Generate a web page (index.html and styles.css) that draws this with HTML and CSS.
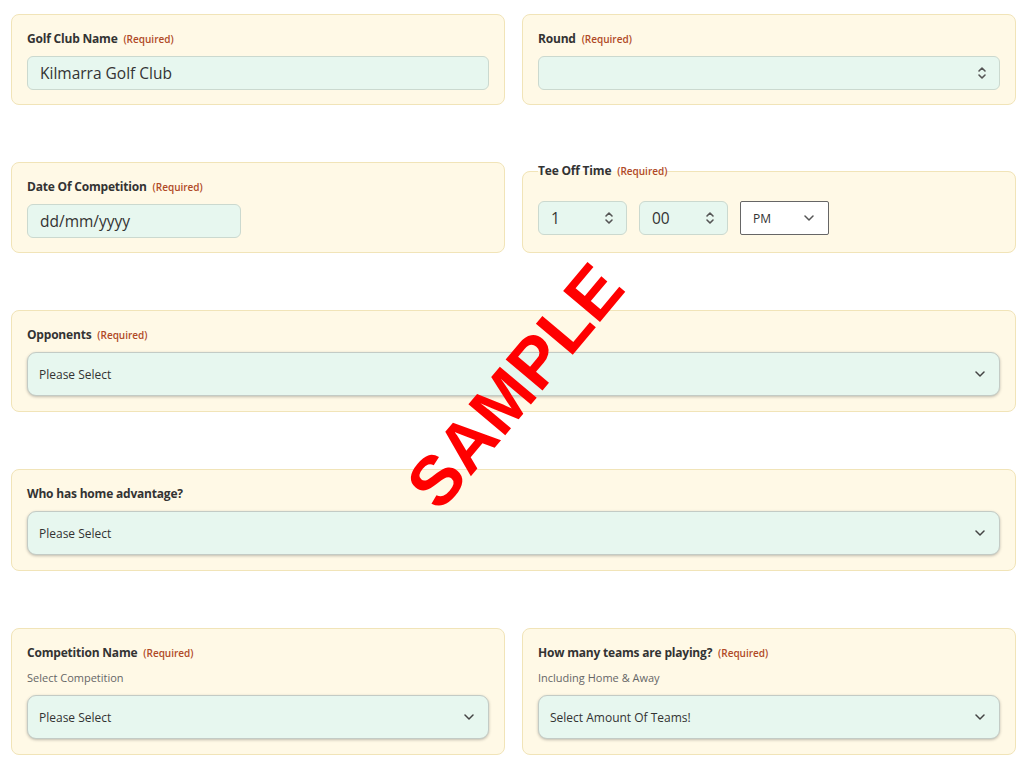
FILE: index.html
```html
<!DOCTYPE html>
<html lang="en">
<head>
  <meta charset="UTF-8" />
  <meta name="viewport" content="width=device-width, initial-scale=1.0" />
  <title>Match Entry</title>
  <link rel="stylesheet" href="styles.css">
</head>
<body>
  <form class="match-form">
    <div class="field-card">
      <label class="field-label" for="club">Golf Club Name <span class="req">(Required)</span></label>
      <input id="club" class="field-input" type="text" value="Kilmarra Golf Club" />
    </div>

    <div class="field-card">
      <label class="field-label" for="round">Round <span class="req">(Required)</span></label>
      <div class="select-wrap">
        <select id="round" class="field-input field-select"><option></option></select>
        <svg class="select-icon spin" width="10" height="14" viewBox="0 0 10 14" fill="none" stroke="#555" stroke-width="1.6" stroke-linecap="round" stroke-linejoin="round"><path d="M2 5l3-3 3 3M2 9l3 3 3-3"/></svg>
      </div>
    </div>

    <div class="field-card">
      <label class="field-label" for="date">Date Of Competition <span class="req">(Required)</span></label>
      <input id="date" class="field-input date-input" type="text" placeholder="dd/mm/yyyy" />
    </div>

    <fieldset class="field-card time-card">
      <legend class="field-label">Tee Off Time <span class="req">(Required)</span></legend>
      <div class="time-row">
        <div class="select-wrap time-part">
          <select class="field-input field-select time-select"><option>1</option></select>
          <svg class="select-icon spin" width="10" height="14" viewBox="0 0 10 14" fill="none" stroke="#555" stroke-width="1.6" stroke-linecap="round" stroke-linejoin="round"><path d="M2 5l3-3 3 3M2 9l3 3 3-3"/></svg>
        </div>
        <div class="select-wrap time-part">
          <select class="field-input field-select time-select"><option>00</option></select>
          <svg class="select-icon spin" width="10" height="14" viewBox="0 0 10 14" fill="none" stroke="#555" stroke-width="1.6" stroke-linecap="round" stroke-linejoin="round"><path d="M2 5l3-3 3 3M2 9l3 3 3-3"/></svg>
        </div>
        <div class="select-wrap time-part">
          <select class="ampm-select"><option>PM</option></select>
          <svg class="select-icon chev" width="10" height="6" viewBox="0 0 10 6" fill="none" stroke="#555" stroke-width="1.5" stroke-linecap="round" stroke-linejoin="round"><path d="M1 1l4 4 4-4"/></svg>
        </div>
      </div>
    </fieldset>

    <div class="field-card wide big">
      <label class="field-label" for="opponents">Opponents <span class="req">(Required)</span></label>
      <div class="select-wrap">
        <select id="opponents" class="field-select big-select"><option>Please Select</option></select>
        <svg class="select-icon chev" width="10" height="6" viewBox="0 0 10 6" fill="none" stroke="#444" stroke-width="1.5" stroke-linecap="round" stroke-linejoin="round"><path d="M1 1l4 4 4-4"/></svg>
      </div>
    </div>

    <div class="field-card wide big">
      <label class="field-label" for="home">Who has home advantage?</label>
      <div class="select-wrap">
        <select id="home" class="field-select big-select"><option>Please Select</option></select>
        <svg class="select-icon chev" width="10" height="6" viewBox="0 0 10 6" fill="none" stroke="#444" stroke-width="1.5" stroke-linecap="round" stroke-linejoin="round"><path d="M1 1l4 4 4-4"/></svg>
      </div>
    </div>

    <div class="field-card big">
      <label class="field-label" for="comp">Competition Name <span class="req">(Required)</span></label>
      <div class="field-hint">Select Competition</div>
      <div class="select-wrap">
        <select id="comp" class="field-select big-select"><option>Please Select</option></select>
        <svg class="select-icon chev" width="10" height="6" viewBox="0 0 10 6" fill="none" stroke="#444" stroke-width="1.5" stroke-linecap="round" stroke-linejoin="round"><path d="M1 1l4 4 4-4"/></svg>
      </div>
    </div>

    <div class="field-card big">
      <label class="field-label" for="teams">How many teams are playing? <span class="req">(Required)</span></label>
      <div class="field-hint">Including Home &amp; Away</div>
      <div class="select-wrap">
        <select id="teams" class="field-select big-select"><option>Select Amount Of Teams!</option></select>
        <svg class="select-icon chev" width="10" height="6" viewBox="0 0 10 6" fill="none" stroke="#444" stroke-width="1.5" stroke-linecap="round" stroke-linejoin="round"><path d="M1 1l4 4 4-4"/></svg>
      </div>
    </div>
  </form>

  <div class="watermark">SAMPLE</div>
</body>
</html>
```

FILE: styles.css
```css
:root {
  --card-bg: #fff9e6;
  --card-border: #f1e4b8;
  --input-bg: #e7f7ef;
  --input-border: #cbd9cf;
  --text: #2d2d2d;
  --req: #b04a26;
}
* { margin: 0; padding: 0; box-sizing: border-box; }
body {
  background: #fff;
  color: var(--text);
  font-family: 'Open Sans', 'Noto Sans', sans-serif;
  padding: 14px 8px 0 11px;
  position: relative;
  min-height: 773px;
}
.match-form {
  display: grid;
  grid-template-columns: 1fr 1fr;
  column-gap: 17px;
  row-gap: 57px;
}
.field-card {
  background: var(--card-bg);
  border: 1px solid var(--card-border);
  border-radius: 8px;
  padding: 15px 15px 14px;
  display: flex;
  flex-direction: column;
  min-width: 0;
}
.field-card.big { padding-bottom: 15px; }
.field-card.wide { grid-column: 1 / -1; }
.field-label {
  display: block;
  font-size: 12px;
  font-weight: 700;
  line-height: 18px;
  color: #333;
  letter-spacing: -0.2px;
  margin-bottom: 8px;
}
.req {
  font-size: 10px;
  font-weight: 600;
  color: var(--req);
  margin-left: 3px;
  letter-spacing: 0;
}
.field-hint {
  font-size: 11px;
  color: #666;
  line-height: 16px;
  margin: 0 0 9px;
}
.field-input {
  width: 100%;
  height: 34px;
  background: var(--input-bg);
  border: 1px solid var(--input-border);
  border-radius: 6px;
  padding: 0 12px;
  font-family: inherit;
  font-size: 15.5px;
  color: #333;
  outline: none;
}
.date-input { width: 214px; }
.date-input::placeholder { color: #333; opacity: 1; }
.select-wrap { position: relative; }
.field-select {
  appearance: none;
  -webkit-appearance: none;
  display: block;
  width: 100%;
  font-family: inherit;
  cursor: pointer;
}
.select-icon {
  position: absolute;
  top: 50%;
  transform: translateY(-50%);
  pointer-events: none;
}
.select-icon.spin { right: 13px; }
.select-icon.chev { right: 15px; }
.big-select {
  height: 44px;
  background: var(--input-bg);
  border: 1px solid #c3cbc5;
  border-radius: 9px;
  box-shadow: 0 1px 3px rgba(0, 0, 0, 0.25);
  padding: 0 11px;
  font-size: 12px;
  color: #333;
  outline: none;
}
.time-card {
  min-inline-size: 0;
  padding: 21px 15px 16px;
}
.time-card legend {
  margin-bottom: 0;
  padding: 0;
}
.time-row {
  display: flex;
  gap: 12px;
}
.time-part { width: 89px; }
.time-select { padding-left: 12px; }
.ampm-select {
  appearance: none;
  -webkit-appearance: none;
  width: 89px;
  height: 34px;
  background: #fff;
  border: 1px solid #666;
  border-radius: 2px;
  padding: 0 12px;
  font-family: inherit;
  font-size: 12px;
  color: #333;
  outline: none;
}
.watermark {
  position: absolute;
  left: 515px;
  top: 386px;
  transform: translate(-50%, -50%) rotate(-50deg);
  font-family: 'Liberation Sans', Arial, sans-serif;
  font-weight: 700;
  font-size: 70px;
  color: #f00;
  letter-spacing: 0;
  pointer-events: none;
  white-space: nowrap;
  line-height: 1;
}
```
